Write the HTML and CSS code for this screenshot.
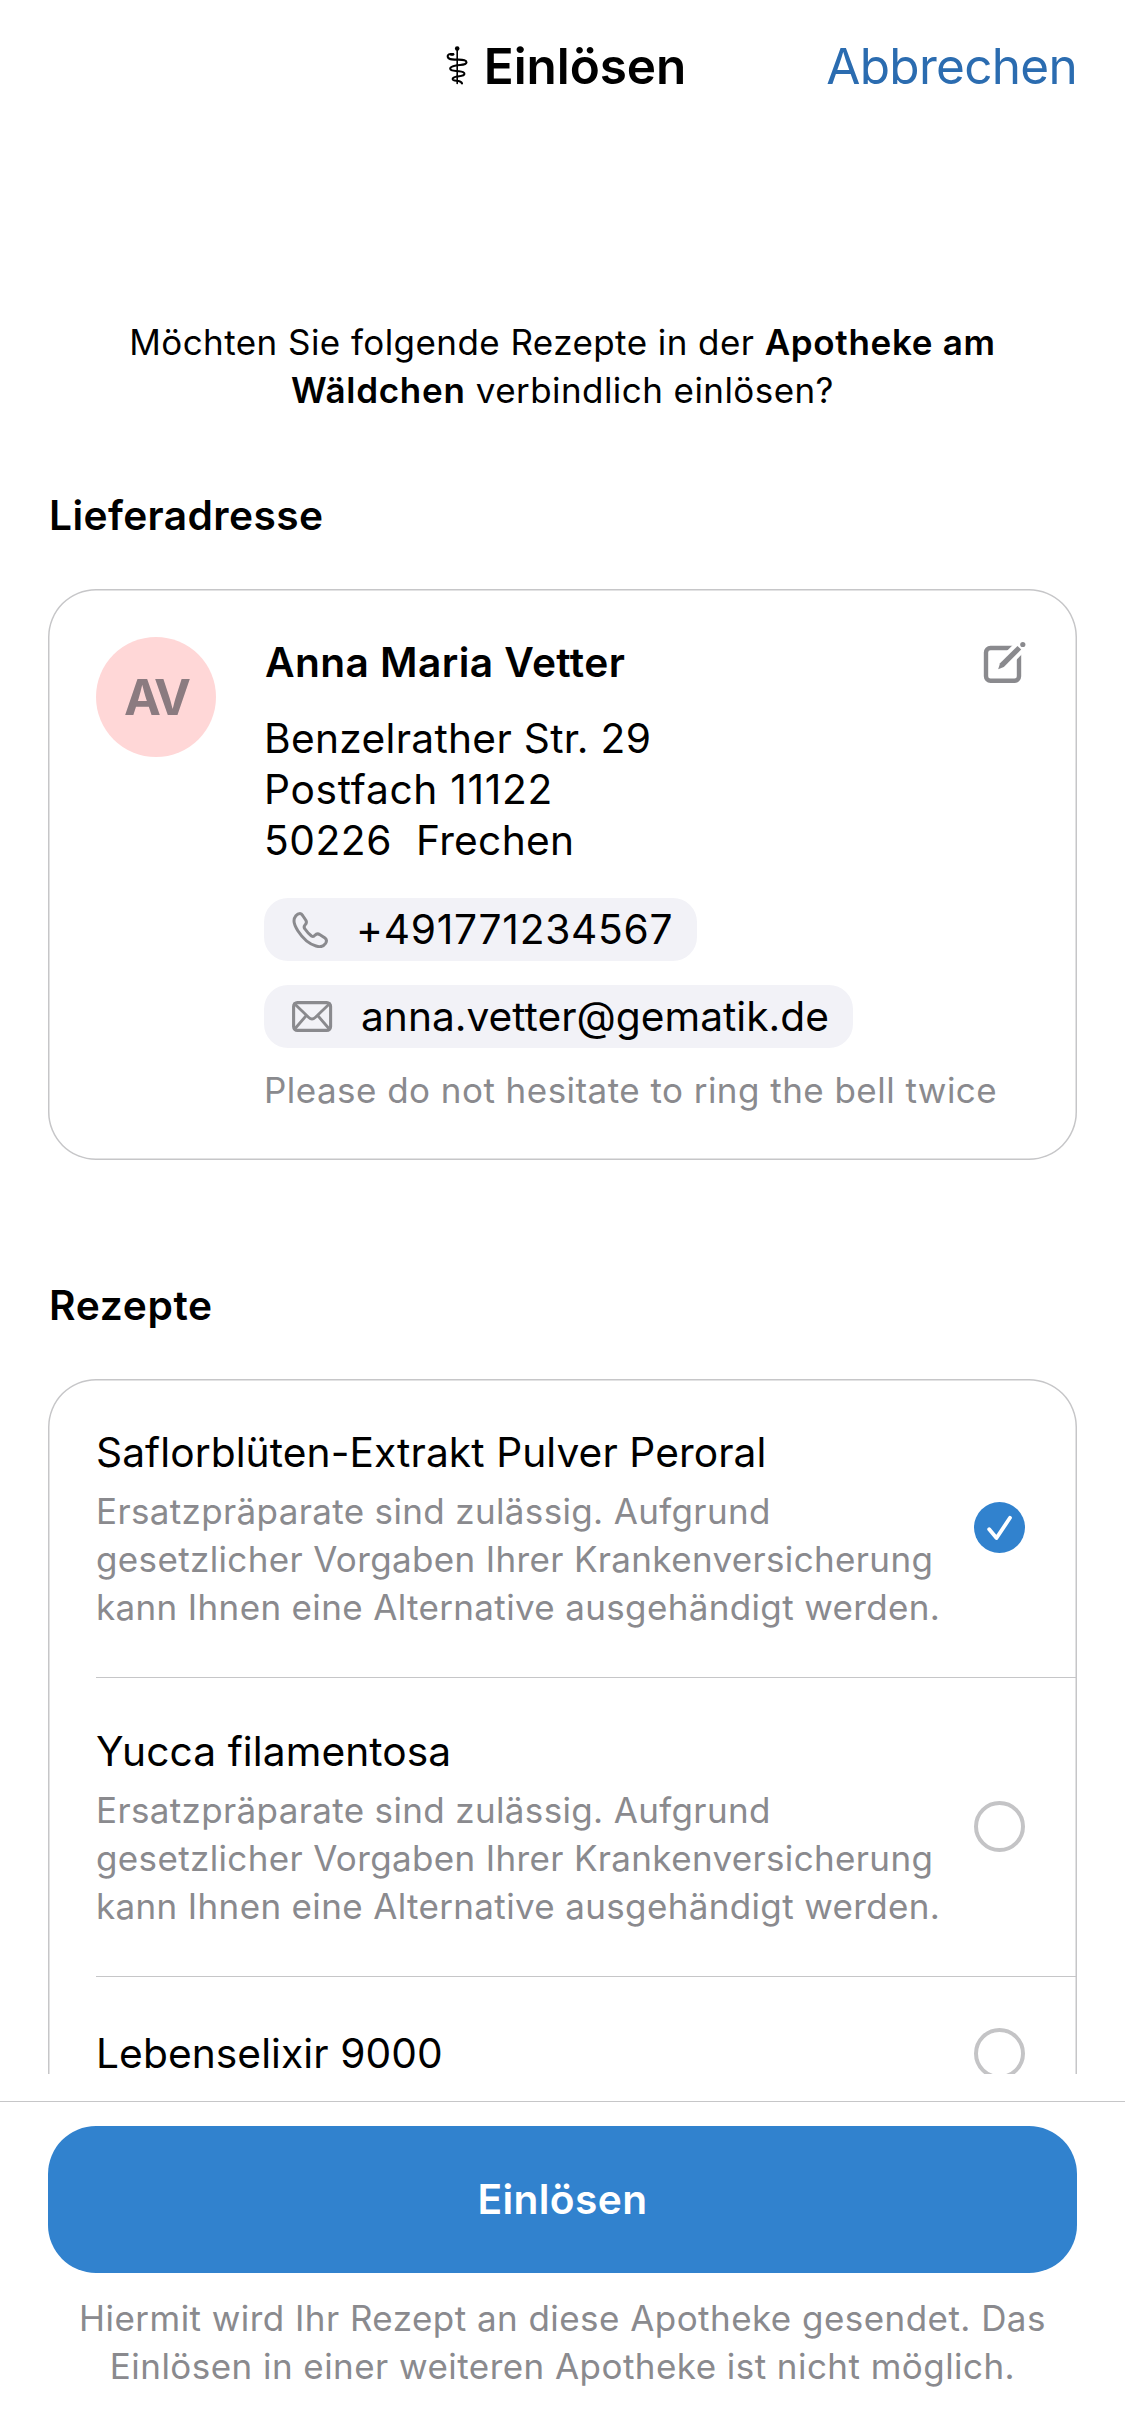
FILE: index.html
```html
<!DOCTYPE html>
<html lang="de">
<head>
<meta charset="utf-8">
<title>Einlösen</title>
<link rel="stylesheet" href="styles.css">
</head>
<body>
<header class="nav">
  <h1 class="nav-title">
    <svg class="staff" viewBox="0 0 29 40" fill="none" stroke="#000" stroke-linecap="round">
      <circle cx="18.2" cy="3.5" r="2.3" fill="#000" stroke="none"/>
      <path d="M18.2 4V38.5" stroke-width="1.6"/>
      <path d="M14 9.3L12 9.3" stroke-width="2.8"/>
      <path d="M14 9.3C10.5 8.3 8.3 9.8 8.7 11.8C9.4 15.5 14.5 14.4 19.5 14.6C24.5 14.8 27.6 15.4 27.5 17.4C27.3 20.4 21.5 19.6 17 20.5C13.5 21.2 11.2 21.9 11.2 23.5C11.3 26.3 16 25.7 20 26.2C23.5 26.6 25.6 27.3 25.4 28.9C25.2 31.2 21 31 18 31.5C15.5 32 13.5 32.8 13.7 34.2C14 36 17 35.6 19.5 36C21.5 36.4 22.7 37.3 23 38.5" stroke-width="2.1"/>
    </svg>
    <span>Einlösen</span>
  </h1>
  <a class="nav-cancel">Abbrechen</a>
</header>

<main class="scroll">
  <p class="intro">Möchten Sie folgende Rezepte in der <strong>Apotheke am<br>Wäldchen</strong> verbindlich einlösen?</p>

  <h2 class="section-title">Lieferadresse</h2>
  <section class="card address">
    <div class="avatar">AV</div>
    <div class="contact">
      <h3 class="name">Anna Maria Vetter</h3>
      <p class="street">Benzelrather Str. 29<br><span class="box">Postfach 11122</span><br><span class="zip">50226&nbsp; </span>Frechen</p>
      <div class="pills">
        <div class="pill pill-phone">
          <svg width="36" height="36" viewBox="0 0 36 36" fill="none" stroke="#8a8a8e" stroke-width="3" stroke-linejoin="round">
            <path d="M2 9C2 5 5 1.5 8 1.5C9.5 1.5 10.2 2.7 11 4L14 8.5C15 10.5 14.5 11.5 13 13C11.8 14.3 11.8 15.5 13 17C15 20 17 22 19.5 24C21 25 22 24.5 23 23.2C24.5 21.5 26 21.4 28 22.7L33 26C35 27.5 35 29 33.5 31.5C31.5 34.5 28 35.3 24 34C17 32 10.5 26 6 19C3.5 15 2 12 2 9Z"/>
          </svg>
          <span>+491771234567</span>
        </div>
        <div class="pill">
          <svg width="41" height="31" viewBox="0 0 41 31" fill="none" stroke="#8a8a8e" stroke-width="3.1" stroke-linecap="round" stroke-linejoin="round">
            <rect x="1.6" y="1.6" width="37" height="27.8" rx="3.8"/>
            <path d="M2.5 2.8L16.8 16.5Q20 19.5 23.2 16.5L37.5 2.8M14.3 14.5L2.7 28M25.7 14.5L37.3 28" stroke-width="2.8"/>
          </svg>
          <span>anna.vetter@gematik.de</span>
        </div>
      </div>
      <p class="hint">Please do not hesitate to ring the bell twice</p>
    </div>
    <svg class="edit" width="42" height="42" viewBox="0 0 42 42" fill="none" stroke="#8a8a8e">
      <rect x="2" y="6" width="33" height="32.7" rx="4.5" stroke-width="4.4"/>
      <path d="M20 21L42 -1" stroke="#fff" stroke-width="13"/>
      <path d="M14.2 27.2L16 21.3L33.5 3.9L37.2 7.6L19.8 25.1Z" fill="#8a8a8e" stroke="none"/>
      <circle cx="38.8" cy="2.5" r="2.6" fill="#8a8a8e" stroke="none"/>
    </svg>
  </section>

  <h2 class="section-title section-title-next">Rezepte</h2>
  <ul class="card recipes">
    <li class="recipe">
      <div class="recipe-text">
        <h3>Saflorblüten-Extrakt Pulver Peroral</h3>
        <p>Ersatzpräparate sind zulässig. Aufgrund<br>gesetzlicher Vorgaben Ihrer Krankenversicherung<br>kann Ihnen eine Alternative ausgehändigt werden.</p>
      </div>
      <span class="check check-on">
        <svg width="51" height="51" viewBox="0 0 51 51" fill="none" stroke="#fff" stroke-width="3.8" stroke-linecap="round" stroke-linejoin="round"><path d="M15.2 27.3L22.5 36L36 15.8"/></svg>
      </span>
    </li>
    <li class="recipe">
      <div class="recipe-text">
        <h3>Yucca filamentosa</h3>
        <p>Ersatzpräparate sind zulässig. Aufgrund<br>gesetzlicher Vorgaben Ihrer Krankenversicherung<br>kann Ihnen eine Alternative ausgehändigt werden.</p>
      </div>
      <span class="check"></span>
    </li>
    <li class="recipe recipe-single">
      <div class="recipe-text">
        <h3>Lebenselixir 9000</h3>
      </div>
      <span class="check"></span>
    </li>
  </ul>
</main>

<footer class="footer">
  <button class="submit" type="button">Einlösen</button>
  <p class="legal">Hiermit wird Ihr Rezept an diese Apotheke gesendet. Das<br>Einlösen in einer weiteren Apotheke ist nicht möglich.</p>
</footer>
</body>
</html>
```
FILE: styles.css
```css
* { box-sizing: border-box; margin: 0; padding: 0; }

body {
  display: flex;
  flex-direction: column;
  height: 2436px;
  overflow: hidden;
  background: #fff;
  color: #000;
  font-family: Inter, "Liberation Sans", sans-serif;
  font-size: 40.7px;
  line-height: 51px;
}

h1, h2, h3 { font-size: inherit; font-weight: 600; }

/* Navigation bar */
.nav {
  display: grid;
  grid-template-columns: 1fr auto 1fr;
  flex: none;
  height: 96px;
  padding: 36px 48px 0;
  font-size: 49.5px;
  line-height: 60px;
}
.nav-title { grid-column: 2; display: flex; gap: 16px; letter-spacing: -0.1px; }
.staff { width: 29px; height: 40px; margin-top: 9px; }
.nav-cancel {
  justify-self: end;
  color: #2b6cb0;
  letter-spacing: -0.71px;
}

/* Scrolling content */
.scroll { flex: 1; min-height: 0; overflow: hidden; padding: 0 48px; }
.intro {
  margin: 222px 0 76px;
  font-size: 35px;
  line-height: 48px;
  letter-spacing: 0.43px;
  text-align: center;
  white-space: nowrap;
}
.intro strong { font-weight: 600; letter-spacing: 0.7px; }
.section-title { margin-bottom: 48px; padding-left: 1px; letter-spacing: 0.4px; }
.section-title-next { margin-top: 120px; letter-spacing: 0.67px; }
.card { border-radius: 48px; box-shadow: inset 0 0 0 1.5px #c6c6c8; }

/* Delivery address */
.address { display: flex; align-items: flex-start; padding: 48px 51px 46px 48px; }
.avatar {
  display: flex;
  align-items: center;
  justify-content: center;
  flex: none;
  width: 120px;
  height: 120px;
  margin-right: 48px;
  border-radius: 50%;
  background: #ffd7d7;
  color: #8b7b80;
  font-size: 49.5px;
  font-weight: 700;
  letter-spacing: -3px;
}
.contact { flex: 1; min-width: 0; white-space: nowrap; }
.name { margin: 0 0 25px; padding-left: 1px; letter-spacing: 0.41px; }
.street { letter-spacing: 0.3px; }
.box { letter-spacing: 0.7px; }
.zip { letter-spacing: 0.55px; }
.pills { display: flex; flex-direction: column; align-items: flex-start; gap: 24px; margin: 32px 0 18px; }
.pill {
  display: flex;
  align-items: center;
  gap: 28px;
  height: 63px;
  padding: 0 24px 0 28px;
  border-radius: 24px;
  background: #f2f2f7;
}
.pill-phone { letter-spacing: 0.75px; }
.hint { color: #8a8a8e; font-size: 35px; line-height: 48px; letter-spacing: 0.46px; }
.edit { flex: none; margin-top: 5px; overflow: visible; }

/* Prescriptions */
.recipes { list-style: none; }
.recipe {
  display: flex;
  align-items: center;
  justify-content: space-between;
  margin: 0 1px 0 48px;
  padding: 48px 51px 46px 0;
  border-bottom: 1px solid #c6c6c8;
}
.recipe-text { white-space: nowrap; }
.recipe h3 { font-weight: 400; letter-spacing: 0.08px; }
.recipe p {
  margin-top: 9px;
  color: #8a8a8e;
  font-size: 35px;
  line-height: 48px;
  letter-spacing: 0.35px;
}
.check {
  flex: none;
  width: 51px;
  height: 51px;
  margin-bottom: 3px;
  border: 4px solid #c4c4c6;
  border-radius: 50%;
}
.check-on { border: 0; background: #3182ce; }
.check svg { display: block; }
.recipe-single { padding: 51px 51px 51px 0; border-bottom: 0; }
.recipe-single h3 { line-height: 41px; }
.recipe-single .check { margin-bottom: 0; }

/* Bottom action bar */
.footer {
  flex: none;
  margin-top: 27px;
  padding: 24px 48px 46px;
  border-top: 1px solid #c6c6c8;
}
.submit {
  display: block;
  width: 100%;
  height: 147px;
  border: 0;
  border-radius: 48px;
  background: #3182ce;
  color: #fff;
  font: 600 40.7px/51px Inter, "Liberation Sans", sans-serif;
  letter-spacing: 0.38px;
}
.legal {
  margin-top: 21px;
  color: #8a8a8e;
  font-size: 35px;
  line-height: 48px;
  letter-spacing: 0.45px;
  text-align: center;
  white-space: nowrap;
}
```
